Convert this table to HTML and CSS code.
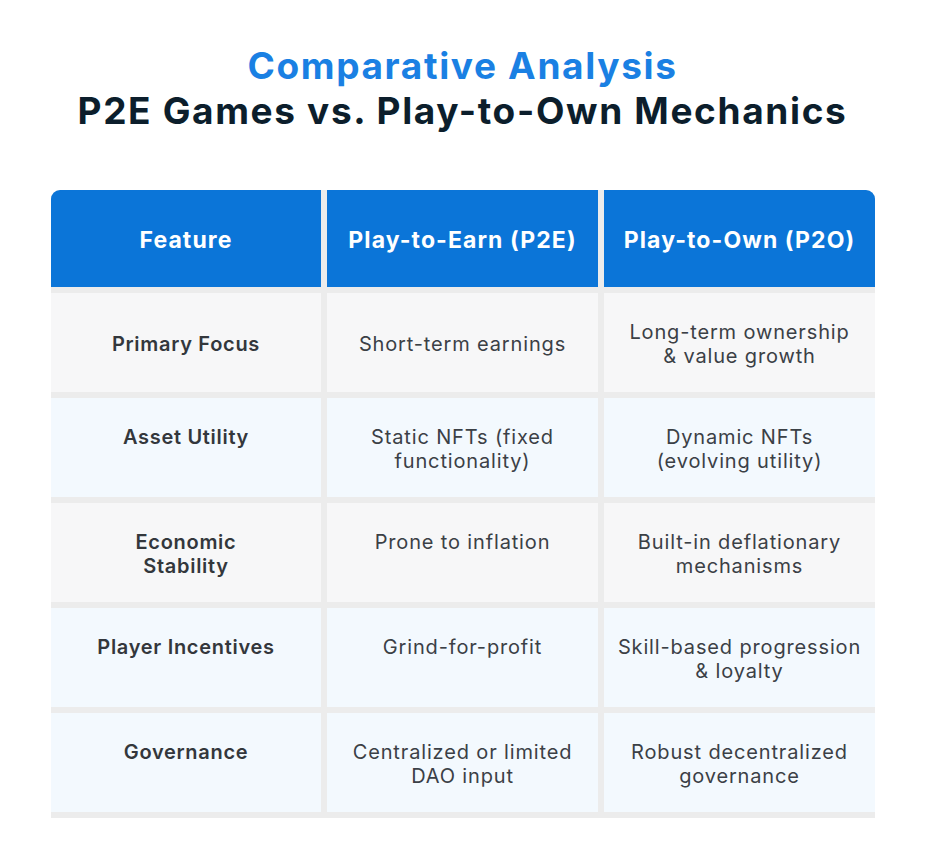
FILE: index.html
```html
<!DOCTYPE html>
<html lang="en">
<head>
<meta charset="utf-8">
<title>Comparative Analysis</title>
<link rel="stylesheet" href="styles.css">
</head>
<body>
<div class="page">
  <h1 class="title">
    <span class="title-top">Comparative Analysis</span>
    <span class="title-bottom">P2E Games vs. Play-to-Own Mechanics</span>
  </h1>
  <div class="table">
    <div class="hcell hcell-first">Feature</div>
    <div class="hcell">Play-to-Earn (P2E)</div>
    <div class="hcell hcell-last">Play-to-Own (P2O)</div>

    <div class="cell feat gray mid">Primary Focus</div>
    <div class="cell gray mid">Short-term earnings</div>
    <div class="cell gray mid">Long-term ownership<br>&amp; value growth</div>

    <div class="cell feat blue">Asset Utility</div>
    <div class="cell blue">Static NFTs (fixed<br>functionality)</div>
    <div class="cell blue">Dynamic NFTs<br>(evolving utility)</div>

    <div class="cell feat gray">Economic<br>Stability</div>
    <div class="cell gray">Prone to inflation</div>
    <div class="cell gray">Built-in deflationary<br>mechanisms</div>

    <div class="cell feat blue">Player Incentives</div>
    <div class="cell blue">Grind-for-profit</div>
    <div class="cell blue">Skill-based progression<br>&amp; loyalty</div>

    <div class="cell feat blue">Governance</div>
    <div class="cell blue">Centralized or limited<br>DAO input</div>
    <div class="cell blue">Robust decentralized<br>governance</div>
  </div>
</div>
</body>
</html>
```
FILE: styles.css
```css
* { box-sizing: border-box; }
html, body { margin: 0; padding: 0; background: #ffffff; }
body { font-family: "Inter", "Open Sans", sans-serif; }
.page { width: 925px; height: 863px; padding-top: 43px; }
.title {
  margin: 0;
  display: flex;
  flex-direction: column;
  align-items: center;
  font-weight: 700;
  font-size: 37px;
  line-height: 45px;
  letter-spacing: 1.65px;
}
.title-top { color: #1a80e3; }
.title-bottom { color: #0c1e2c; }
.table {
  margin: 57px 0 0 51px;
  width: 824px;
  display: grid;
  grid-template-columns: 270px 271px 271px;
  grid-template-rows: 97px repeat(5, 99px);
  column-gap: 6px;
  row-gap: 6px;
  padding-bottom: 6px;
  background: #ececec;
  border-radius: 9px 9px 0 0;
}
.hcell {
  background: #0b75d8;
  color: #ffffff;
  font-weight: 700;
  font-size: 23px;
  padding-top: 2px;
  display: flex;
  align-items: center;
  justify-content: center;
  letter-spacing: 1.1px;
}
.hcell-first { border-top-left-radius: 9px; }
.hcell-last { border-top-right-radius: 9px; }
.cell {
  display: flex;
  align-items: flex-start;
  justify-content: center;
  text-align: center;
  padding-top: 27px;
  font-size: 20px;
  line-height: 24px;
  color: #3b4046;
  letter-spacing: 0.85px;
}
.cell.mid { align-items: center; padding-top: 2px; }
.feat { font-weight: 600; color: #33373c; letter-spacing: 0.7px; }
.gray { background: #f7f7f8; }
.blue { background: #f3f9fe; }
```
